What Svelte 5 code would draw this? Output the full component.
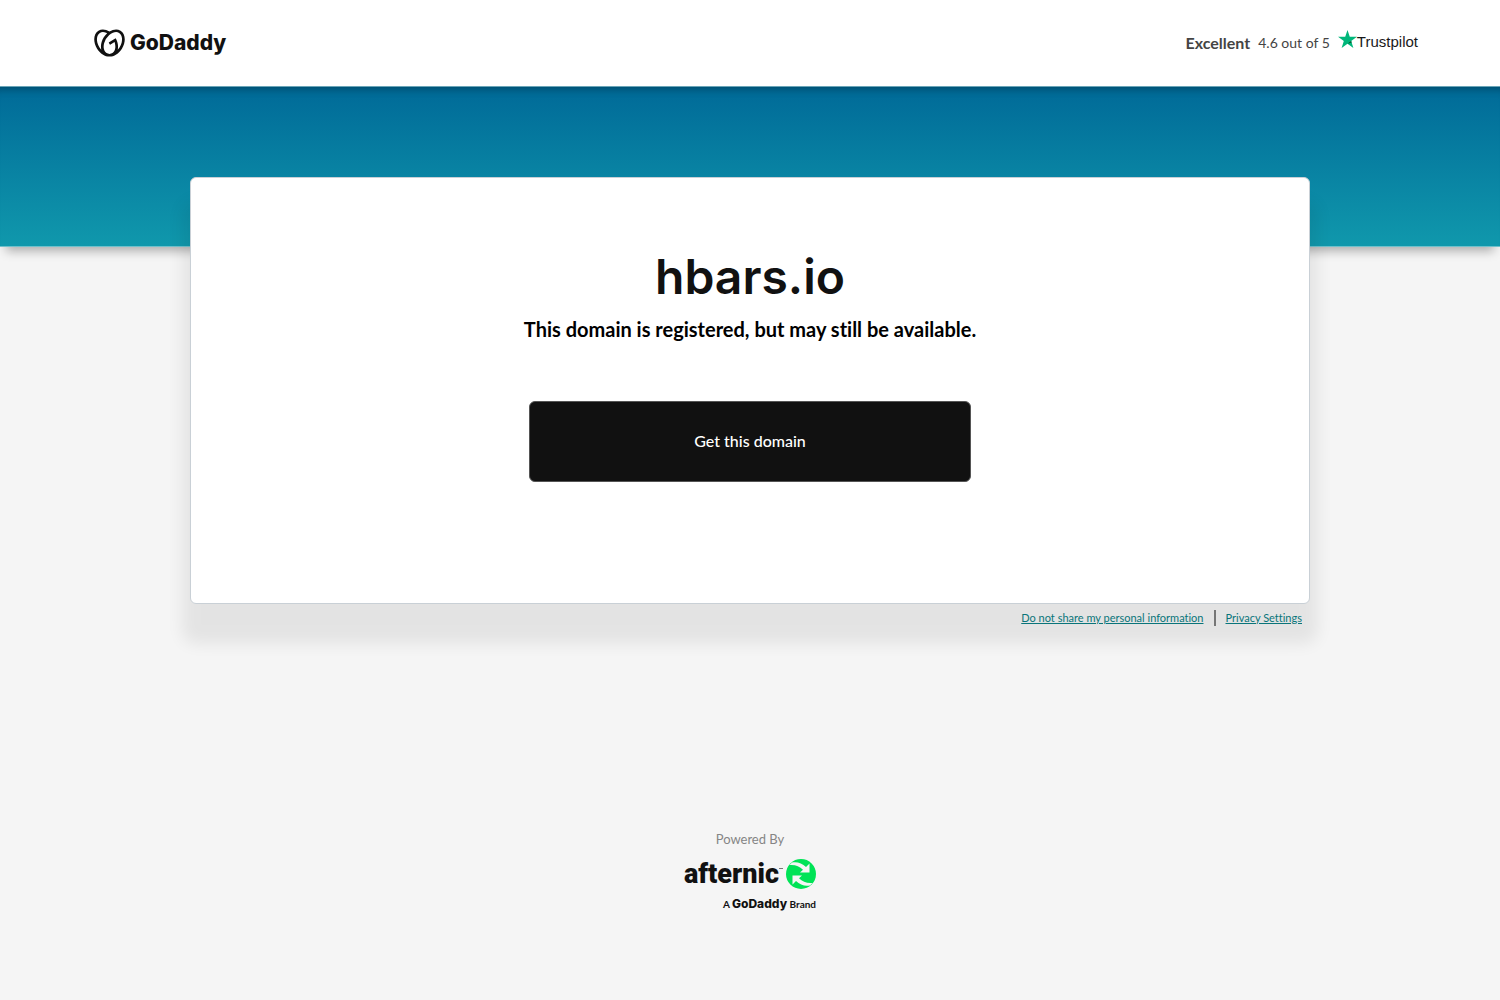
<script>
  const domain = 'hbars.io';
</script>

<div class="page">
  <header class="topbar">
    <a class="godaddy" href="#home" aria-label="GoDaddy home">
      <svg class="heart" viewBox="0 1 24 22" aria-hidden="true">
        <path d="M20.702 2.29c-2.494-1.554-5.778-1.187-8.706.654C9.076 1.104 5.79.736 3.3 2.29c-3.941 2.463-4.42 8.806-1.07 14.167 2.47 3.954 6.333 6.269 9.77 6.226 3.439.043 7.301-2.273 9.771-6.226 3.347-5.361 2.872-11.704-1.069-14.167zM4.042 15.328a12.838 12.838 0 01-1.546-3.541 10.12 10.12 0 01-.336-3.338c.15-1.98.956-3.524 2.27-4.345 1.315-.822 3.052-.87 4.903-.137.281.113.556.24.825.382A15.11 15.11 0 007.5 7.54c-2.035 3.255-2.655 6.878-1.945 9.765a13.247 13.247 0 01-1.514-1.98zm17.465-3.541a12.866 12.866 0 01-1.547 3.54 13.25 13.25 0 01-1.513 1.984c.635-2.589.203-5.76-1.353-8.734a.39.39 0 00-.563-.153l-4.852 3.032a.397.397 0 00-.126.546l.712 1.139a.395.395 0 00.547.126l3.145-1.965c.101.306.203.606.28.916.296 1.086.41 2.214.335 3.337-.15 1.982-.956 3.525-2.27 4.347a4.437 4.437 0 01-2.25.65h-.101a4.432 4.432 0 01-2.25-.65c-1.314-.822-2.121-2.365-2.27-4.347-.074-1.123.039-2.251.335-3.337a13.212 13.212 0 014.05-6.482 10.148 10.148 0 012.849-1.765c1.845-.733 3.586-.685 4.9.137 1.316.822 2.122 2.365 2.271 4.345a10.146 10.146 0 01-.333 3.334z" />
      </svg>
      <span class="wordmark">GoDaddy</span>
    </a>
    <a class="rating" href="#reviews">
      <strong>Excellent</strong>
      <span class="score">4.6 out of 5</span>
      <span class="trustpilot">
        <svg class="star" viewBox="0 0 20 19" aria-hidden="true">
          <path fill="#00b67a" d="M10 0l2.4 7.2H20l-6.1 4.5 2.3 7.3L10 14.500 3.800 19l2.300-7.300L0 7.200h7.600z" />
          <path fill="#005128" d="M14.400 13.300l-.5-1.600L10 14.500z" />
        </svg>
        <span>Trustpilot</span>
      </span>
    </a>
  </header>

  <div class="band"></div>

  <main>
    <section class="card">
      <h1>{domain}</h1>
      <h2>This domain is registered, but may still be available.</h2>
      <button type="button">Get this domain</button>
    </section>
    <nav class="legal" aria-label="Privacy">
      <a href="#do-not-share">Do not share my personal information</a>
      <span class="divider"></span>
      <a href="#privacy">Privacy Settings</a>
    </nav>
  </main>

  <footer>
    <div class="powered">Powered By</div>
    <a class="afternic" href="#afternic">
      <span class="brand">
        <span class="name">afternic</span>
        <span class="tm"></span>
        <svg class="swirl" viewBox="0 0 30 30" aria-hidden="true">
          <circle cx="15" cy="15" r="15" fill="#00e356" />
          <path fill="#f5f5f5" d="M6 3.500C11 2.500 16 4 20 8L23.500 4.500V13.500H14L17 10.700C13.500 7 9 5.500 3.500 6Z" />
          <path fill="#f5f5f5" d="M24 26.500C19 27.500 14 26 10 22L6.500 25.500V16.500H16L13 19.300C16.500 23 21 24.500 26.500 24Z" />
        </svg>
      </span>
      <span class="tagline">A <b>GoDaddy</b> Brand</span>
    </a>
  </footer>
</div>

<style>
  :global(body) {
    margin: 0;
    background: #f5f5f5;
  }
  .page {
    font-family: Lato, 'Open Sans', sans-serif;
    font-variant-ligatures: none;
    color: #111;
  }
  a {
    color: inherit;
    text-decoration: none;
  }
  .topbar {
    display: flex;
    align-items: center;
    justify-content: space-between;
    box-sizing: border-box;
    height: 86px;
    padding: 0 82px 0 94px;
    background: #fff;
  }
  .godaddy {
    display: flex;
    align-items: center;
    gap: 5px;
  }
  .heart {
    width: 31px;
    height: 28px;
    fill: #111;
  }
  .wordmark {
    font-family: Inter, sans-serif;
    font-size: 21px;
    font-weight: 800;
    line-height: 28px;
  }
  .rating {
    display: flex;
    align-items: center;
    gap: 8px;
    padding-bottom: 2px;
    color: #444;
    font-size: 14px;
  }
  .rating strong {
    font-size: 16px;
  }
  .trustpilot {
    display: flex;
    color: #191919;
    font-family: 'Liberation Sans', sans-serif;
    font-size: 15px;
    line-height: 24px;
  }
  .star {
    width: 19px;
    height: 18px;
  }
  .band {
    box-sizing: border-box;
    height: 161px;
    border-top: 1px solid #6aa5b8;
    border-bottom: 1px solid #6fc0cb;
    background: linear-gradient(#006a98, #1098ac);
    box-shadow:
      0 10px 10px -6px rgba(0, 0, 0, 0.3),
      inset 0 10px 8px -8px rgba(0, 0, 0, 0.3);
  }
  main {
    position: relative;
    box-sizing: border-box;
    max-width: 1120px;
    margin: -70px auto 0;
  }
  .card {
    display: flex;
    flex-direction: column;
    align-items: center;
    padding: 64px 24px 121px;
    border: 1px solid #c9d0d6;
    border-radius: 6px;
    background: #fff;
    box-shadow: 0 32px 16px 8px rgba(0, 0, 0, 0.07);
    text-align: center;
  }
  h1 {
    margin: 0;
    font-family: Inter, sans-serif;
    font-size: 48px;
    font-weight: 600;
    line-height: 70px;
  }
  h2 {
    margin: 0;
    color: #000;
    font-size: 20px;
    font-weight: 700;
    line-height: 34px;
  }
  button {
    width: 100%;
    max-width: 442px;
    height: 81px;
    margin-top: 55px;
    padding: 0 0 2px;
    border: 1px solid #555;
    border-radius: 6px;
    background: #111;
    color: #fff;
    font-family: inherit;
    font-size: 16px;
    font-weight: 500;
    line-height: 24px;
  }
  .legal {
    display: flex;
    position: relative;
    align-items: center;
    justify-content: flex-end;
    gap: 10px;
    height: 28px;
    padding-right: 8px;
    color: #09757a;
    font-size: 11px;
  }
  .legal a {
    padding-bottom: 2px;
    text-decoration: underline;
  }
  .divider {
    width: 2px;
    height: 16px;
    background: #767676;
  }
  footer {
    display: flex;
    flex-direction: column;
    align-items: center;
    padding-top: 197px;
  }
  .powered {
    color: #858585;
    font-size: 13px;
    line-height: 20px;
  }
  .afternic {
    display: flex;
    flex-direction: column;
    align-items: flex-end;
    margin-top: 10px;
  }
  .brand {
    display: flex;
    align-items: center;
  }
  .name {
    font-family: Roboto, sans-serif;
    font-size: 27px;
    font-weight: 900;
    line-height: 30px;
  }
  .tm {
    align-self: flex-start;
    width: 4px;
    height: 1px;
    margin: 9px 3px 0 0;
    background: #777;
  }
  .swirl {
    width: 30px;
    height: 30px;
  }
  .tagline {
    margin-top: 8px;
    font-size: 10px;
    font-weight: 700;
    line-height: 14px;
  }
  .tagline b {
    font-family: Inter, sans-serif;
    font-size: 12px;
    font-weight: 800;
  }
</style>
